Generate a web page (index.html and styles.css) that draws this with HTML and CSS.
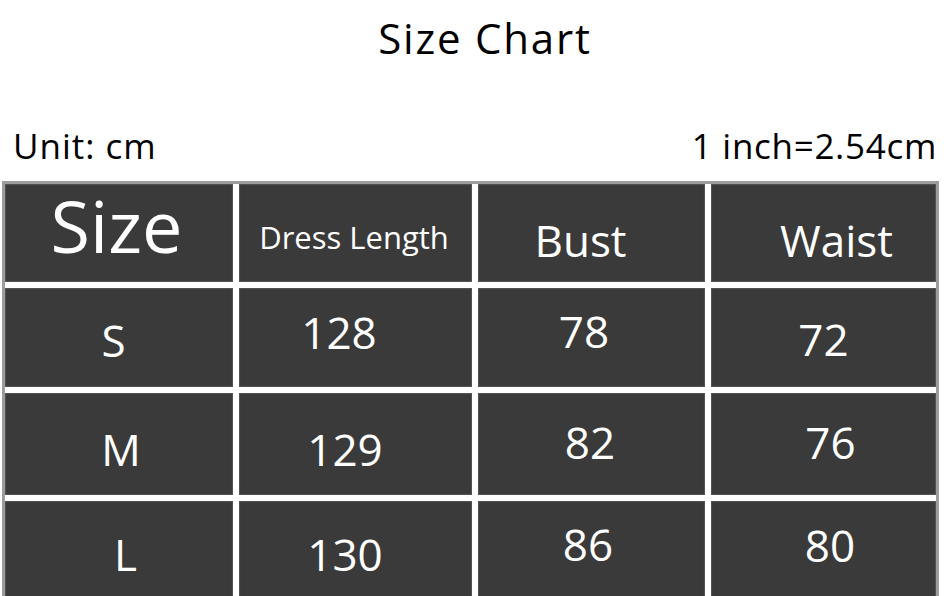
FILE: index.html
```html
<!DOCTYPE html>
<html lang="en">
<head>
<meta charset="utf-8">
<title>Size Chart</title>
<link rel="stylesheet" href="styles.css">
</head>
<body>
<div class="page">
  <h1 class="title">Size Chart</h1>
  <div class="info">
    <span class="unit">Unit: cm</span>
    <span class="conv">1 inch=2.54cm</span>
  </div>
  <div class="chart">
    <div class="cell head-size">Size</div>
    <div class="cell head-small head-dress">Dress Length</div>
    <div class="cell head-bust">Bust</div>
    <div class="cell head-waist">Waist</div>

    <div class="cell s-size">S</div>
    <div class="cell s-len">128</div>
    <div class="cell s-bust">78</div>
    <div class="cell s-waist">72</div>

    <div class="cell m-size">M</div>
    <div class="cell m-len">129</div>
    <div class="cell m-bust">82</div>
    <div class="cell m-waist">76</div>

    <div class="cell l-size">L</div>
    <div class="cell l-len">130</div>
    <div class="cell l-bust">86</div>
    <div class="cell l-waist">80</div>
  </div>
</div>
</body>
</html>
```
FILE: styles.css
```css
html, body {
  margin: 0;
  padding: 0;
  background: #ffffff;
}

body {
  font-family: "Open Sans", "Noto Sans", sans-serif;
  color: #000;
  width: 944px;
  height: 596px;
  overflow: hidden;
}

.page {
  display: flex;
  flex-direction: column;
}

.title {
  margin: 0;
  padding: 9px 0 0 26px;
  font-size: 42px;
  font-weight: 400;
  letter-spacing: 1.8px;
  text-align: center;
  line-height: normal;
}

.info {
  display: flex;
  justify-content: space-between;
  margin-top: 56px;
  padding: 0 7px 0 13px;
  font-size: 35px;
  line-height: normal;
}

.unit {
  letter-spacing: 1px;
}

.conv {
  letter-spacing: 0.7px;
}

.chart {
  margin: 12px 0 0 2px;
  width: 937px;
  box-sizing: border-box;
  border: 3px solid #9c9c9c;
  border-bottom: none;
  background: #ffffff;
  display: grid;
  grid-template-columns: 228px 233px 227px 225px;
  grid-template-rows: 98px 99px 102px 100px;
  column-gap: 6px;
  row-gap: 6px;
}

.cell {
  background: #3a3a3a;
  color: #ffffff;
  font-size: 44px;
  line-height: normal;
  display: flex;
  align-items: center;
  justify-content: center;
  box-shadow: inset 0 0 1px 1px #555;
}

.head-size { font-size: 72px; padding: 0 5px 17px 0; }
.head-small { font-size: 31px; }
.head-dress { padding: 8px 3px 0 0; }
.head-bust { padding: 14px 22px 0 0; }
.head-waist { padding: 14px 0 0 26px; }

.s-size { padding: 4px 11px 0 0; }
.s-len { padding: 0 33px 12px 0; }
.s-bust { padding: 0 15px 13px 0; }
.s-waist { padding: 3px 0 0 0; }

.m-size { padding: 10px 0 0 4px; }
.m-len { padding: 9px 21px 0 0; }
.m-bust { padding: 0 3px 4px 0; }
.m-waist { padding: 0 0 4px 14px; }

.l-size { padding: 5px 0 0 13px; }
.l-len { padding: 5px 21px 0 0; }
.l-bust { padding: 0 7px 14px 0; }
.l-waist { padding: 0 0 12px 13px; }
```
